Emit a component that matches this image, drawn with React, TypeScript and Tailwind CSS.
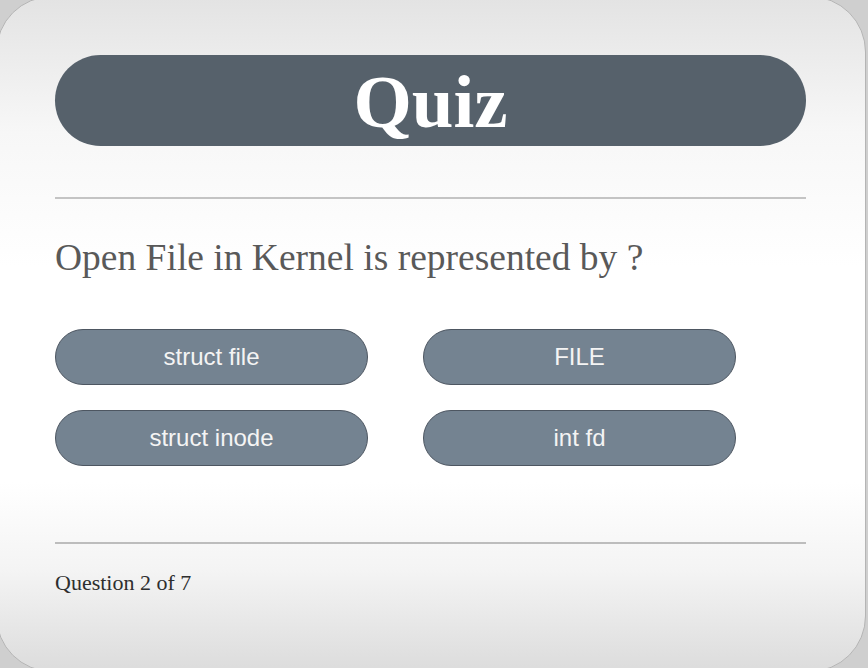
const options = ["struct file", "FILE", "struct inode", "int fd"];

const App = () => {
  return (
    <div className="w-[868px] h-[668px] overflow-hidden bg-[#cfcfcf]">
      <div
        className="ml-[-4px] mt-[-4px] w-[870px] h-[676px] rounded-[56px] border border-[#b5b5b5] bg-[linear-gradient(to_bottom,#e3e3e3_0%,#f7f7f7_20%,#ffffff_40%,#ffffff_72%,#f4f4f4_85%,#dcdcdc_100%)] pl-[58px] pr-[59px] pt-[58px]"
        style={{ fontFamily: '"Liberation Serif", "Times New Roman", serif' }}
      >
        <div className="h-[91px] rounded-full bg-[#56616b] flex items-center justify-center">
          <h1 className="text-[75px] font-bold text-white leading-none mt-[2px]">Quiz</h1>
        </div>

        <div className="mt-[51px] h-[2px] bg-[#c4c4c4]" />

        <p className="mt-[37px] text-[37.5px] leading-[44px] text-[#595959]">
          Open File in Kernel is represented by ?
        </p>

        <div className="mt-[49px] grid grid-cols-[313px_313px] gap-x-[55px] gap-y-[25px]">
          {options.map((opt) => (
            <button
              key={opt}
              className="h-[56px] rounded-full border border-[#4d5661] bg-[#748391] text-[24px] text-[#f4f4f4]"
              style={{ fontFamily: '"Liberation Sans", Arial, sans-serif' }}
            >
              {opt}
            </button>
          ))}
        </div>

        <div className="mt-[76px] h-[2px] bg-[#bdbdbd]" />

        <p className="mt-[22px] text-[22px] text-[#2e2e2e]">Question 2 of 7</p>
      </div>
    </div>
  );
};

export default App;
